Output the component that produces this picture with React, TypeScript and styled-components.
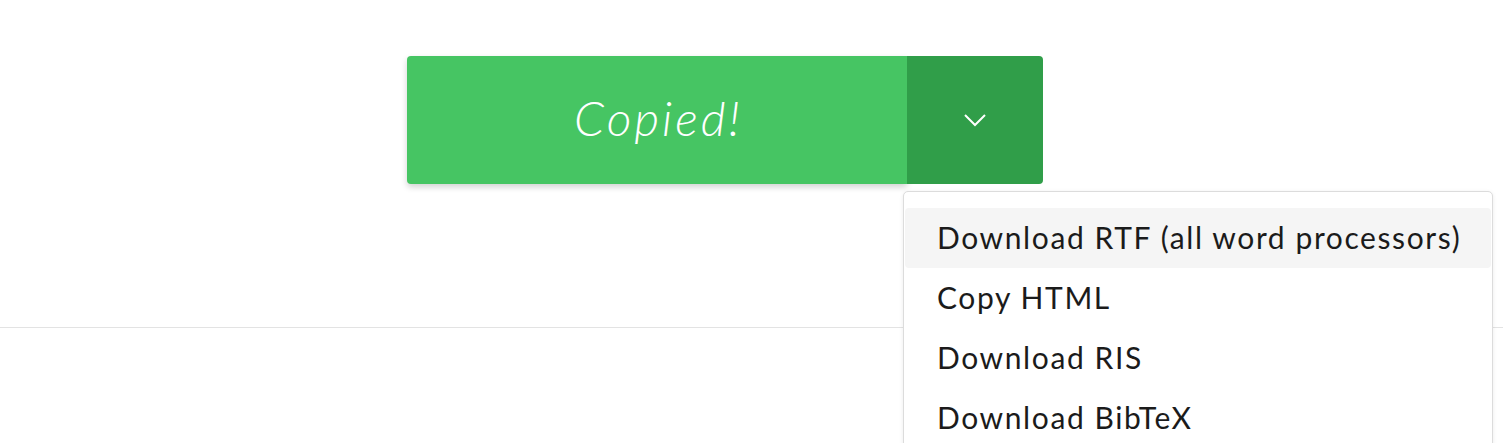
import React from "react";
import styled, { createGlobalStyle } from "styled-components";

const GlobalStyle = createGlobalStyle`
  html, body {
    margin: 0;
    padding: 0;
    background: #ffffff;
    overflow: hidden;
  }
  body {
    font-family: Lato, "Noto Sans", "Liberation Sans", sans-serif;
    color: #1b1b1b;
  }
`;

const Page = styled.div`
  width: 1503px;
  height: 443px;
  overflow: hidden;
  display: flex;
  flex-direction: column;
`;

const Top = styled.section`
  height: 328px;
  box-sizing: border-box;
  padding: 56px 0 0 407px;
  border-bottom: 1px solid #e3e3e3;
  position: relative;
  z-index: 1;
`;

const SplitButton = styled.div`
  position: relative;
  display: flex;
  width: 636px;
  height: 128px;
`;

const MainButton = styled.button`
  flex: 0 0 500px;
  height: 100%;
  border: none;
  margin: 0;
  padding: 0 0 5px 3px;
  background: #46c563;
  color: #ffffff;
  border-radius: 4px 0 0 4px;
  box-shadow: 0 3px 6px rgba(0, 0, 0, 0.18);
  font-family: Lato, "Noto Sans", sans-serif;
  font-style: italic;
  font-weight: 300;
  font-size: 48px;
  letter-spacing: 3px;
  display: flex;
  align-items: center;
  justify-content: center;
  cursor: pointer;
`;

const ToggleButton = styled.button`
  flex: 1 1 auto;
  height: 100%;
  border: none;
  margin: 0;
  padding: 0;
  background: #309e49;
  border-radius: 0 4px 4px 0;
  display: flex;
  align-items: center;
  justify-content: center;
  cursor: pointer;
`;

const Menu = styled.ul`
  position: absolute;
  top: 135px;
  left: 496px;
  width: 590px;
  box-sizing: border-box;
  margin: 0;
  padding: 16px 1px 0;
  list-style: none;
  background: #ffffff;
  border: 1px solid #dcdcdc;
  border-radius: 5px;
  box-shadow: 0 1px 4px rgba(0, 0, 0, 0.08);
`;

const MenuItem = styled.li<{ $active?: boolean }>`
  height: 60px;
  display: flex;
  align-items: center;
  padding: 0 0 2px 32px;
  box-sizing: border-box;
  background: ${(p) => (p.$active ? "#f5f5f5" : "transparent")};
  border-radius: 4px;
  font-size: 30px;
  font-weight: 400;
  letter-spacing: 1.6px;
  color: #1b1b1b;
  white-space: nowrap;
`;

const Rest = styled.div`
  flex: 1;
`;

const Chevron = () => (
  <svg width="24" height="14" viewBox="0 0 24 14" fill="none">
    <path d="M2 2 L12 12 L22 2" stroke="#ffffff" strokeWidth="2" />
  </svg>
);

export default function App() {
  return (
    <>
      <GlobalStyle />
      <Page>
        <Top>
          <SplitButton>
            <MainButton>Copied!</MainButton>
            <ToggleButton aria-label="More options">
              <Chevron />
            </ToggleButton>
            <Menu>
              <MenuItem $active>Download RTF (all word processors)</MenuItem>
              <MenuItem>Copy HTML</MenuItem>
              <MenuItem>Download RIS</MenuItem>
              <MenuItem>Download BibTeX</MenuItem>
            </Menu>
          </SplitButton>
        </Top>
        <Rest />
      </Page>
    </>
  );
}
